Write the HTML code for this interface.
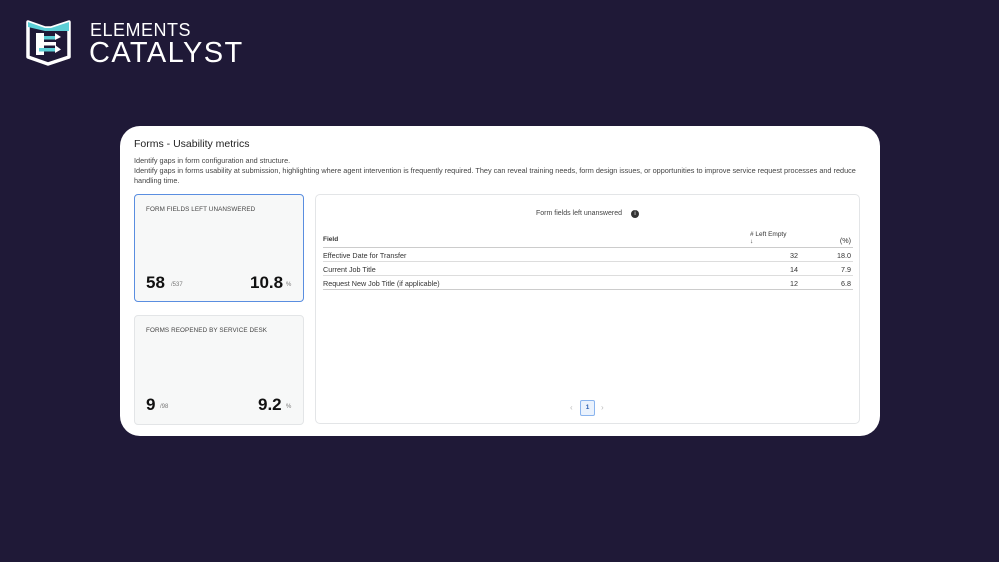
<!DOCTYPE html>
<html><head><style>
*{margin:0;padding:0;box-sizing:border-box}
body{width:999px;height:562px;background:#1f1937;font-family:"Liberation Sans",sans-serif;position:relative;overflow:hidden}
.abs{position:absolute}
.card{left:120px;top:126px;width:760px;height:310px;background:#fff;border-radius:20px}
.t{color:#222}
.kpi{background:#f7f8f8;border:1px solid #e3e5e7;border-radius:4px;width:170px}
.kl{font-size:6.3px;color:#444;letter-spacing:.1px}
.big{font-size:17px;font-weight:bold;color:#111}
.sm{font-size:6px;color:#777}
.row{position:absolute;left:323px;width:530px;font-size:7.2px;color:#333;border-bottom:1px solid #ddd;height:14px}
.row span{position:absolute;top:3px}
</style></head><body>
<svg class="abs" style="left:25px;top:19px" width="47" height="47" viewBox="0 0 47 47">
<path d="M3 3 L20 9 L26 9 L44 3 L44 38 L23 45 L3 38 Z" fill="none" stroke="#fff" stroke-width="3.5" stroke-linejoin="round"/>
<path d="M3 3 L20 9 L26 9 L44 3 L44 12 L26 12 L20 12 L3 8 Z" fill="#5ccfd6"/>
<rect x="11" y="14" width="8" height="22" fill="#fff"/>
<rect x="19" y="17" width="12" height="3.5" fill="#5ccfd6"/>
<rect x="19" y="23" width="12" height="3.5" fill="#fff"/>
<rect x="14" y="29" width="17" height="3.5" fill="#5ccfd6"/>
<path d="M30 14 L36 18 L30 21Z M30 26 L36 30.5 L30 34Z" fill="#fff"/>
</svg>
<div class="abs" style="left:90px;top:20px;color:#fff;font-size:18px;letter-spacing:0.5px;font-weight:300">ELEMENTS</div>
<div class="abs" style="left:89px;top:37px;color:#fff;font-size:29px;letter-spacing:1.4px">CATALYST</div>
<div class="abs card"></div>
<div class="abs t" style="left:134px;top:138px;font-size:10.5px">Forms - Usability metrics</div>
<div class="abs" style="left:134px;top:156px;font-size:7.3px;color:#444;line-height:10px;width:730px">Identify gaps in form configuration and structure.<br>Identify gaps in forms usability at submission, highlighting where agent intervention is frequently required. They can reveal training needs, form design issues, or opportunities to improve service request processes and reduce handling time.</div>
<div class="abs kpi" style="left:134px;top:194px;height:108px;border:1.5px solid #5a8ee0"></div>
<div class="abs kl" style="left:146px;top:206px">FORM FIELDS LEFT UNANSWERED</div>
<div class="abs big" style="left:146px;top:273px">58</div><div class="abs sm" style="left:171px;top:282px">/537</div>
<div class="abs big" style="left:250px;top:273px">10.8</div><div class="abs sm" style="left:286px;top:282px">%</div>
<div class="abs kpi" style="left:134px;top:315px;height:110px"></div>
<div class="abs kl" style="left:146px;top:327px">FORMS REOPENED BY SERVICE DESK</div>
<div class="abs big" style="left:146px;top:395px">9</div><div class="abs sm" style="left:160px;top:404px">/98</div>
<div class="abs big" style="left:258px;top:395px">9.2</div><div class="abs sm" style="left:286px;top:404px">%</div>
<div class="abs" style="left:315px;top:194px;width:545px;height:230px;border:1px solid #e3e5e7;border-radius:5px"></div>
<div class="abs" style="left:536px;top:210px;font-size:7px;color:#444">Form fields left unanswered</div>
<div class="abs" style="left:631px;top:210px;width:8px;height:8px;border-radius:50%;background:#333;color:#fff;font-size:6px;text-align:center;line-height:8px">i</div>
<div class="row" style="top:231px;height:17px;border-bottom:1.5px solid #ccc"><span style="left:0;top:5px;font-size:6.5px;font-weight:bold">Field</span><span style="left:427px;top:0;font-size:6.5px">#&nbsp;Left Empty<br>↓</span><span style="right:2px;top:5px">(%)</span></div>
<div class="row" style="top:248px"><span style="left:0">Effective Date for Transfer</span><span style="right:55px">32</span><span style="right:2px">18.0</span></div>
<div class="row" style="top:262px"><span style="left:0">Current Job Title</span><span style="right:55px">14</span><span style="right:2px">7.9</span></div>
<div class="row" style="top:276px;border-bottom:1.5px solid #ccc"><span style="left:0">Request New Job Title (if applicable)</span><span style="right:55px">12</span><span style="right:2px">6.8</span></div>
<div class="abs" style="left:570px;top:403px;font-size:8px;color:#bbb">‹</div>
<div class="abs" style="left:580px;top:400px;width:15px;height:16px;border:1px solid #8ab4ee;background:#eaf2fd;border-radius:2px;font-size:6.5px;color:#2a5db0;text-align:center;line-height:14px;font-weight:bold">1</div>
<div class="abs" style="left:601px;top:403px;font-size:8px;color:#bbb">›</div>
</body></html>
